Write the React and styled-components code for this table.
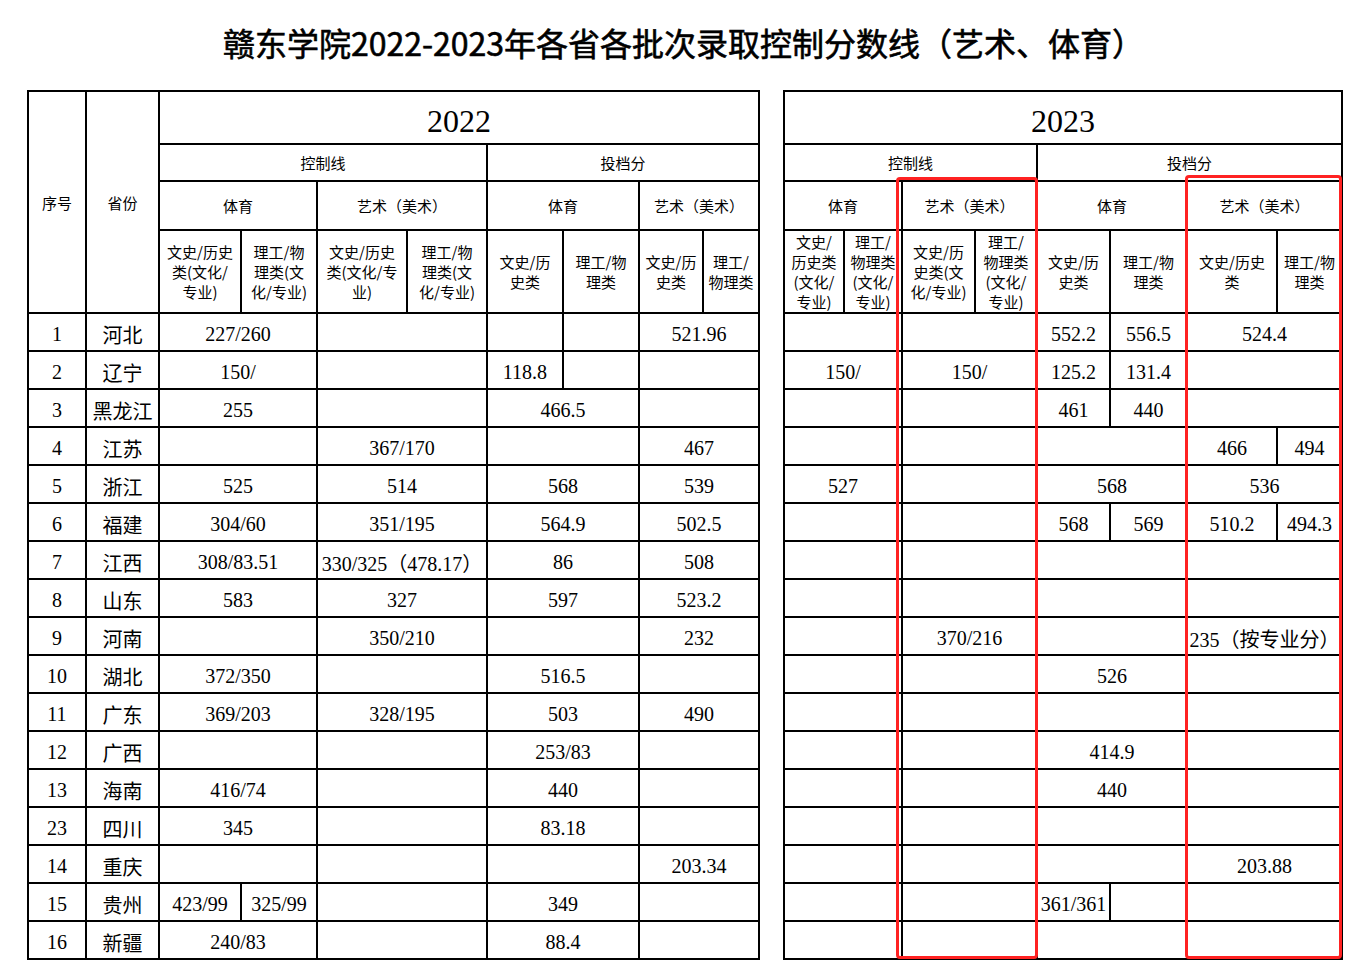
import React from 'react';
import styled, { createGlobalStyle } from 'styled-components';

const GlobalStyle = createGlobalStyle`
    html, body {
        margin: 0;
        padding: 0;
        background: #fff;
    }
`;

const Page = styled.div`
    width: 1367px;
    height: 976px;
    overflow: hidden;
    background: #fff;
`;

const Title = styled.h1`
    margin: 0;
    height: 90px;
    box-sizing: border-box;
    padding-top: 22px;
    text-align: center;
    font: 400 32px/40px 'Noto Sans CJK SC', sans-serif;
    -webkit-text-stroke: 0.6px #000;
    color: #000;
`;

const Tables = styled.div`
    display: flex;
    align-items: flex-start;
    gap: 23px;
    padding-left: 27px;
`;

const Block = styled.div`
    position: relative;
`;

const Grid = styled.table`
    border-collapse: collapse;
    table-layout: fixed;
    width: ${p => p.$w}px;
`;

const Row = styled.tr`
    height: ${p => p.$h}px;
`;

const serif = "'Liberation Serif', 'Noto Sans CJK SC', serif";
const sans = "'Noto Sans CJK SC', sans-serif";

const Cell = styled.td`
    border: 2px solid #000;
    padding: ${p =>
        p.$kind === 'year' ? '8px 0 0' : p.$kind === 'data' ? '4px 0 0' : '0'};
    text-align: center;
    vertical-align: middle;
    white-space: nowrap;
    overflow: hidden;
    color: #000;
    font-family: ${p =>
        p.$kind === 'data' || p.$kind === 'year' ? serif : sans};
    font-size: ${p =>
        p.$kind === 'year' ? '32px' : p.$kind === 'data' ? '20px' : '15px'};
    line-height: ${p => (p.$kind === 'sub' ? '20px' : 'normal')};
`;

const Highlight = styled.div`
    position: absolute;
    left: ${p => p.$x}px;
    top: ${p => p.$y}px;
    width: ${p => p.$w}px;
    height: ${p => p.$h}px;
    box-sizing: border-box;
    border: 3px solid #ff2222;
    border-radius: 4px;
    pointer-events: none;
`;

const leftCols = [58, 73, 82, 76, 90, 80, 76, 76, 64, 56];
const rightCols = [60, 58, 73, 62, 73, 77, 90, 65];

const leftSubs = [
    ['文史/历史', '类(文化/', '专业)'],
    ['理工/物', '理类(文', '化/专业)'],
    ['文史/历史', '类(文化/专', '业)'],
    ['理工/物', '理类(文', '化/专业)'],
    ['文史/历', '史类'],
    ['理工/物', '理类'],
    ['文史/历', '史类'],
    ['理工/', '物理类'],
];

const rightSubs = [
    ['文史/', '历史类', '(文化/', '专业)'],
    ['理工/', '物理类', '(文化/', '专业)'],
    ['文史/历', '史类(文', '化/专业)'],
    ['理工/', '物理类', '(文化/', '专业)'],
    ['文史/历', '史类'],
    ['理工/物', '理类'],
    ['文史/历史', '类'],
    ['理工/物', '理类'],
];

const E = ['', 2];
const empty4 = [E, E, E, E];

const leftRows = [
    ['1', '河北', [['227/260', 2], E, ['', 1], ['', 1], ['521.96', 2]]],
    ['2', '辽宁', [['150/', 2], E, ['118.8', 1], ['', 1], E]],
    ['3', '黑龙江', [['255', 2], E, ['466.5', 2], E]],
    ['4', '江苏', [E, ['367/170', 2], E, ['467', 2]]],
    ['5', '浙江', [['525', 2], ['514', 2], ['568', 2], ['539', 2]]],
    ['6', '福建', [['304/60', 2], ['351/195', 2], ['564.9', 2], ['502.5', 2]]],
    ['7', '江西', [['308/83.51', 2], ['330/325（478.17）', 2], ['86', 2], ['508', 2]]],
    ['8', '山东', [['583', 2], ['327', 2], ['597', 2], ['523.2', 2]]],
    ['9', '河南', [E, ['350/210', 2], E, ['232', 2]]],
    ['10', '湖北', [['372/350', 2], E, ['516.5', 2], E]],
    ['11', '广东', [['369/203', 2], ['328/195', 2], ['503', 2], ['490', 2]]],
    ['12', '广西', [E, E, ['253/83', 2], E]],
    ['13', '海南', [['416/74', 2], E, ['440', 2], E]],
    ['23', '四川', [['345', 2], E, ['83.18', 2], E]],
    ['14', '重庆', [E, E, E, ['203.34', 2]]],
    ['15', '贵州', [['423/99', 1], ['325/99', 1], E, ['349', 2], E]],
    ['16', '新疆', [['240/83', 2], E, ['88.4', 2], E]],
];

const rightRows = [
    [E, E, ['552.2', 1], ['556.5', 1], ['524.4', 2]],
    [['150/', 2], ['150/', 2], ['125.2', 1], ['131.4', 1], E],
    [E, E, ['461', 1], ['440', 1], E],
    [E, E, E, ['466', 1], ['494', 1]],
    [['527', 2], E, ['568', 2], ['536', 2]],
    [E, E, ['568', 1], ['569', 1], ['510.2', 1], ['494.3', 1]],
    empty4,
    empty4,
    [E, ['370/216', 2], E, ['235（按专业分）', 2]],
    [E, E, ['526', 2], E],
    empty4,
    [E, E, ['414.9', 2], E],
    [E, E, ['440', 2], E],
    empty4,
    [E, E, E, ['203.88', 2]],
    [E, E, ['361/361', 1], ['', 1], E],
    empty4,
];

const SubHead = ({ lines }) => (
    <Cell $kind="sub">
        {lines.map((l, i) => (
            <React.Fragment key={i}>
                {i > 0 && <br />}
                {l}
            </React.Fragment>
        ))}
    </Cell>
);

const DataCells = ({ cells }) =>
    cells.map(([text, span], i) => (
        <Cell key={i} $kind="data" colSpan={span}>
            {text}
        </Cell>
    ));

const HeaderRows = ({ year, subs, lead }) => (
    <>
        <Row $h={53}>
            {lead && (
                <>
                    <Cell rowSpan={4}>序号</Cell>
                    <Cell rowSpan={4}>省份</Cell>
                </>
            )}
            <Cell $kind="year" colSpan={8}>
                {year}
            </Cell>
        </Row>
        <Row $h={37}>
            <Cell colSpan={4}>控制线</Cell>
            <Cell colSpan={4}>投档分</Cell>
        </Row>
        <Row $h={49}>
            <Cell colSpan={2}>体育</Cell>
            <Cell colSpan={2}>艺术（美术）</Cell>
            <Cell colSpan={2}>体育</Cell>
            <Cell colSpan={2}>艺术（美术）</Cell>
        </Row>
        <Row $h={83}>
            {subs.map((s, i) => (
                <SubHead key={i} lines={s} />
            ))}
        </Row>
    </>
);

const sum = arr => arr.reduce((a, b) => a + b, 0);

export default function App() {
    return (
        <Page>
            <GlobalStyle />
            <Title>赣东学院2022-2023年各省各批次录取控制分数线（艺术、体育）</Title>
            <Tables>
                <Block>
                    <Grid $w={sum(leftCols) + 2}>
                        <colgroup>
                            {leftCols.map((w, i) => (
                                <col key={i} style={{ width: w }} />
                            ))}
                        </colgroup>
                        <tbody>
                            <HeaderRows year="2022" subs={leftSubs} lead />
                            {leftRows.map(([no, prov, cells]) => (
                                <Row $h={38} key={no + prov}>
                                    <Cell $kind="data">{no}</Cell>
                                    <Cell $kind="data">{prov}</Cell>
                                    <DataCells cells={cells} />
                                </Row>
                            ))}
                        </tbody>
                    </Grid>
                </Block>
                <Block>
                    <Grid $w={sum(rightCols) + 2}>
                        <colgroup>
                            {rightCols.map((w, i) => (
                                <col key={i} style={{ width: w }} />
                            ))}
                        </colgroup>
                        <tbody>
                            <HeaderRows year="2023" subs={rightSubs} />
                            {rightRows.map((cells, i) => (
                                <Row $h={38} key={i}>
                                    <DataCells cells={cells} />
                                </Row>
                            ))}
                        </tbody>
                    </Grid>
                    <Highlight $x={113} $y={87} $w={142} $h={782} />
                    <Highlight $x={402} $y={85} $w={157} $h={784} />
                </Block>
            </Tables>
        </Page>
    );
}
